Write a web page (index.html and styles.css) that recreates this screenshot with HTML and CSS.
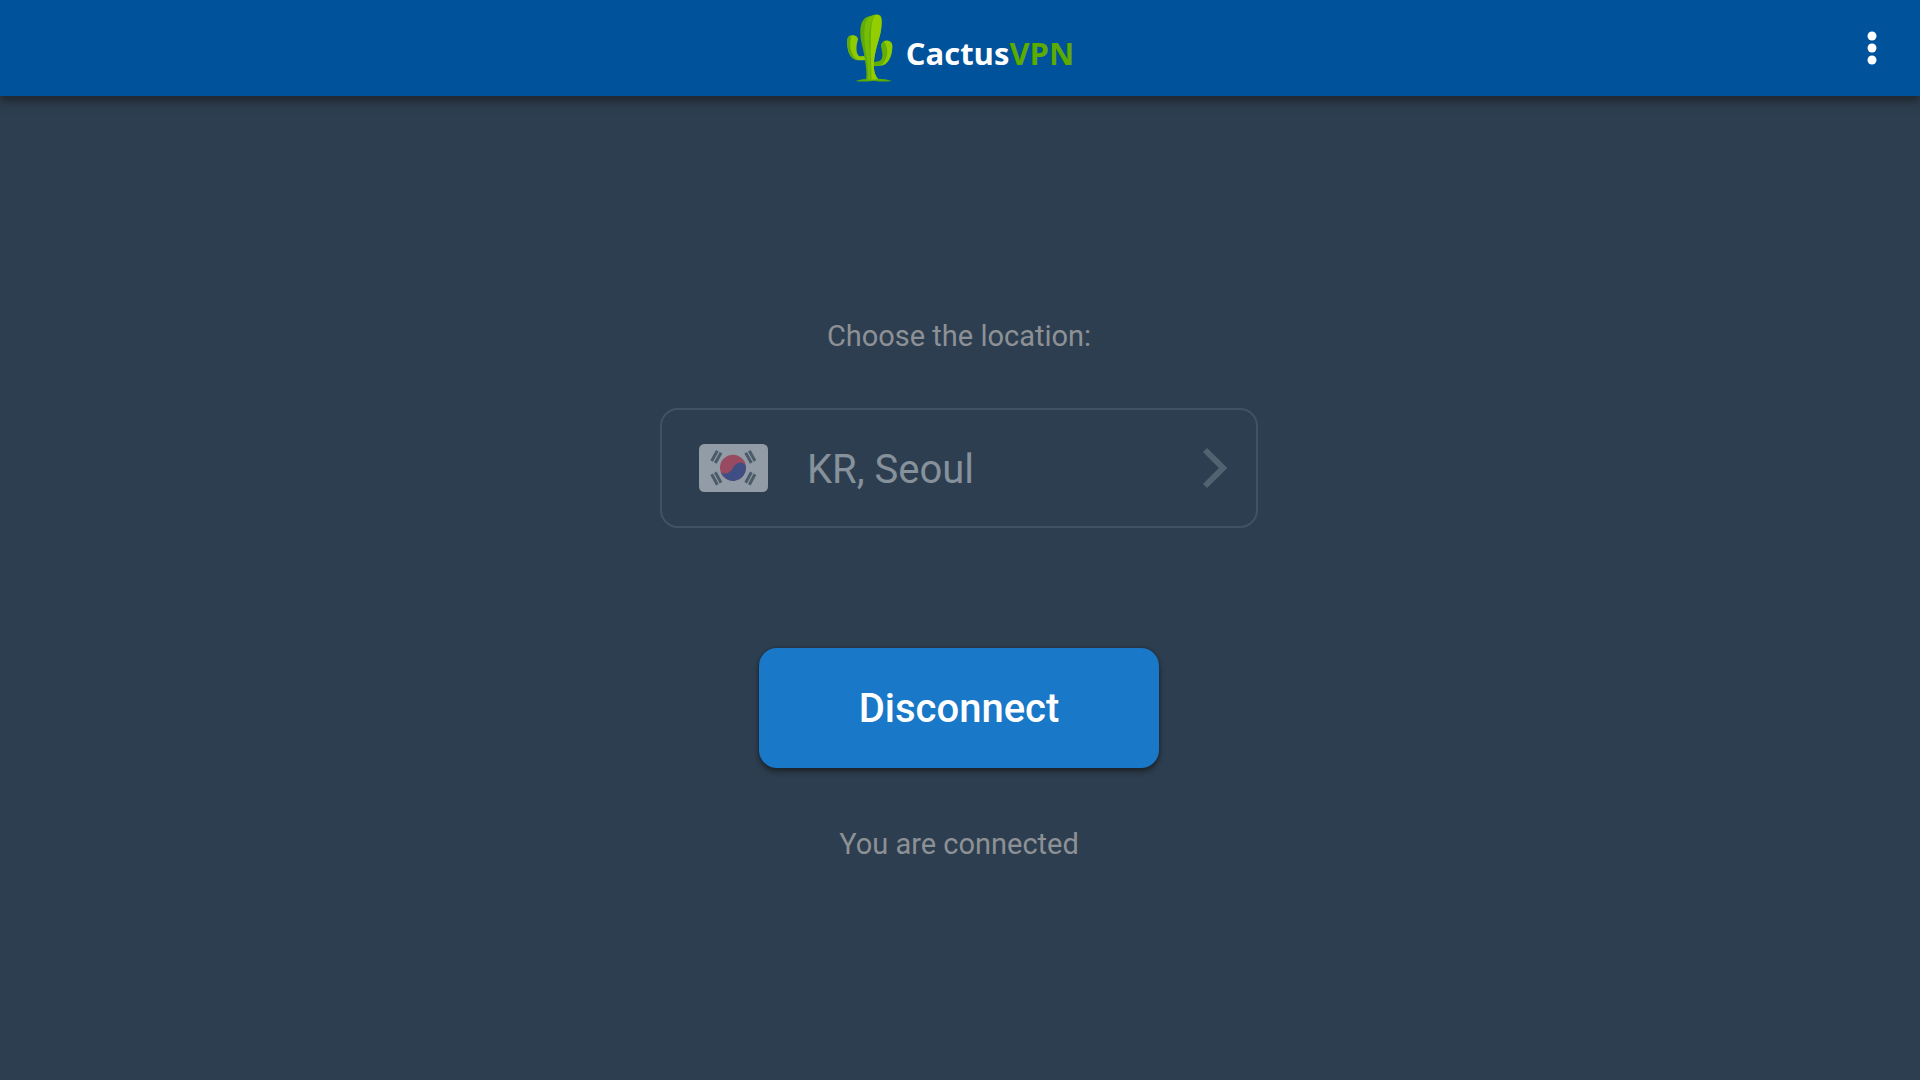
FILE: index.html
```html
<!DOCTYPE html>
<html lang="en">
<head>
<meta charset="utf-8">
<meta name="viewport" content="width=device-width, initial-scale=1">
<title>CactusVPN</title>
<link rel="stylesheet" href="styles.css">
</head>
<body>
<header class="app-bar">
  <div class="brand">
    <svg class="brand-icon" viewBox="20 36 144 210" aria-hidden="true">
      <path d="M48 240Q74 232 103 234Q134 232 158 240Q130 244 103 239Q76 244 48 240Z" fill="#5cab00"/>
      <path d="M24 118C24 98 56 98 56 116C50 130 48 165 64 166L76 165L78 178L56 178C30 176 23 146 24 118Z" fill="#8ecb00"/>
      <path d="M25 112C30 98 37 102 34 116C29 140 38 168 56 178C30 176 20 146 25 112Z" fill="#62ac08"/>
      <path d="M125 136C125 113 160 113 159 137C158 168 145 194 122 195L98 196L101 184L118 181C133 176 130 158 125 136Z" fill="#64ae08"/>
      <path d="M134 121C146 116 160 122 159 137C158 168 145 190 126 193C146 174 150 144 134 121Z" fill="#8ecb00"/>
      <path d="M63 96C62 62 74 46 96 44C104 40 120 38 125 46C130 58 128 76 124 94C118 122 106 151 104 184C102 212 108 225 119 236Q101 240 80 236C84 215 78 184 73 154C69 131 63 118 63 96Z" fill="#5fab0a"/>
      <path d="M83 56C90 46 104 42 108 42C92 62 88 98 90 133C92 174 96 210 93 236L86 236C90 190 78 160 76 120C74 90 76 66 83 56Z" fill="#76bd05"/>
      <path d="M108 42C126 38 130 52 124 94C118 122 106 151 104 184C102 212 108 225 117 235L96 236C98 200 92 160 94 124C95 92 94 58 108 42Z" fill="#94ce00"/>
    </svg>
    <span class="brand-name">Cactus<span class="brand-accent">VPN</span></span>
  </div>
  <button class="menu-button" type="button" aria-label="More options">
    <svg class="menu-icon" viewBox="0 0 48 48" aria-hidden="true">
      <circle cx="24" cy="12" r="4.5"/><circle cx="24" cy="24" r="4.5"/><circle cx="24" cy="36" r="4.5"/>
    </svg>
  </button>
</header>
<main class="content">
  <p class="caption" id="location-label">Choose the location:</p>
  <button class="location" type="button" aria-describedby="location-label">
    <svg class="flag" viewBox="0 0 207 144" aria-hidden="true">
      <rect width="207" height="144" rx="16" fill="#929ca6"/>
      <circle cx="102" cy="71" r="39" fill="#984a60"/>
      <path d="M65 84A39 39 0 0 0 141 71C141 53 112 49 102 71C92 91 72 92 65 84Z" fill="#404f83"/>
      <g fill="none" stroke="#4b5b69" stroke-width="9">
        <path d="M38 51L55 20M49 57L66 26"/>
        <path d="M151 20L168 51M140 26L157 57"/>
        <path d="M38 91L55 122M49 85L66 116"/>
        <path d="M151 122L168 91M140 116L157 85"/>
      </g>
    </svg>
    <span class="location-name">KR, Seoul</span>
    <svg class="chevron" viewBox="0 0 26 42" aria-hidden="true">
      <path d="M4 3L22 21L4 39"/>
    </svg>
  </button>
  <button class="action" type="button">Disconnect</button>
  <p class="caption" role="status">You are connected</p>
</main>
</body>
</html>
```
FILE: styles.css
```css
* {
  box-sizing: border-box;
}

body {
  display: flex;
  flex-direction: column;
  min-height: 100vh;
  margin: 0;
  background: #2d3e50;
  color: #8d9195;
  font-family: Roboto, "Liberation Sans", sans-serif;
}

button {
  border: 0;
  background: none;
  color: inherit;
  font: inherit;
  cursor: pointer;
}

.app-bar {
  display: grid;
  grid-template-columns: 1fr auto 1fr;
  align-items: center;
  height: 96px;
  padding: 0 24px;
  background: #00529b;
  box-shadow: 0 6px 8px rgba(30, 36, 42, 0.85);
}

.brand {
  display: flex;
  grid-column: 2;
  align-items: center;
  gap: 12px;
}

.brand-icon {
  width: 48px;
  height: 70px;
}

.brand-name {
  padding-top: 10px;
  color: #fff;
  font-family: "Open Sans", "Noto Sans", sans-serif;
  font-size: 31px;
  font-weight: 700;
  line-height: 40px;
}

.brand-accent {
  color: #5cab00;
}

.menu-button {
  justify-self: end;
  width: 48px;
  height: 48px;
  padding: 0;
}

.menu-icon {
  display: block;
  fill: #fff;
}

.content {
  display: flex;
  flex: 1;
  flex-direction: column;
  align-items: center;
  justify-content: center;
  padding: 4px 2px 0 0;
}

.caption {
  margin: 0;
  font-size: 29px;
  line-height: 32px;
}

.location {
  display: flex;
  align-items: center;
  width: 598px;
  max-width: 100%;
  height: 120px;
  margin: 56px 0 120px;
  padding: 0 29px 0 37px;
  border: 2px solid #405263;
  border-radius: 18px;
  color: #86919b;
  font-size: 40px;
  text-align: left;
}

.flag {
  width: 69px;
  height: 48px;
}

.location-name {
  flex: 1;
  padding: 2px 0 0 39px;
}

.chevron {
  width: 26px;
  height: 42px;
  fill: none;
  stroke: #516270;
  stroke-width: 6;
}

.action {
  width: 400px;
  max-width: 100%;
  height: 120px;
  margin-bottom: 60px;
  padding-top: 2px;
  border-radius: 18px;
  background: #1a78c8;
  box-shadow: 0 4px 5px rgba(24, 28, 32, 0.7), 0 0 3px rgba(24, 28, 32, 0.5);
  color: #fff;
  font-size: 40px;
  font-weight: 500;
}
```
